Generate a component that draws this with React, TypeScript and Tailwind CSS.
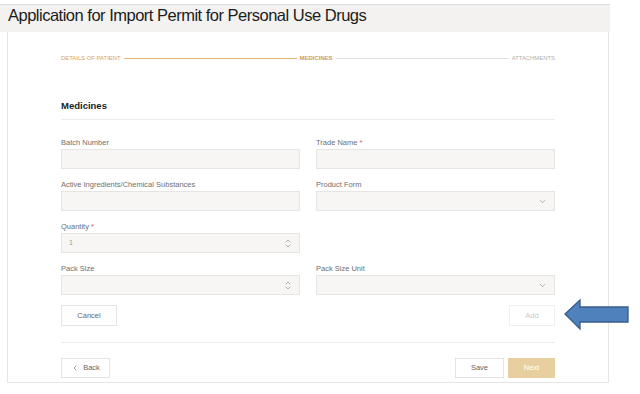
import { ChevronDown, ChevronUp, ChevronLeft } from 'lucide-react'

function Field({ label, required, kind }: { label: string; required?: boolean; kind?: 'text' | 'select' | 'number' }) {
  return (
    <div className="flex flex-col">
      <div className="h-[10px] leading-[10px] text-[7.5px] text-[#6f6f6f]">
        {label}
        {required && <span className="text-[#e05a4f]"> *</span>}
      </div>
      <div className="mt-[1px] h-[20px] bg-[#f7f6f4] border border-[#e7e5e2] flex items-center justify-between px-[7px]">
        <span className="text-[7px] text-[#9a9a9a]">{label === 'Quantity' ? '1' : ''}</span>
        {kind === 'select' && <ChevronDown size={9} strokeWidth={1.5} className="text-[#777]" />}
        {kind === 'number' && (
          <div className="flex flex-col items-center -space-y-[3px]">
            <ChevronUp size={8} strokeWidth={1.6} className="text-[#777]" />
            <ChevronDown size={8} strokeWidth={1.6} className="text-[#777]" />
          </div>
        )}
      </div>
    </div>
  )
}

export default function App() {
  return (
    <div className="relative w-[640px] h-[394px] bg-white overflow-hidden font-['Liberation_Sans',Arial,sans-serif]">
      {/* Page title band */}
      <div className="mt-[4px] w-[610px] h-[28px] bg-[#f3f2f1] border-t border-[#dcdcdc] pl-[8px]">
        <h1 className="text-[16.5px] leading-[21px] tracking-[-0.5px] text-[#1c1c1c]">
          Application for Import Permit for Personal Use Drugs
        </h1>
      </div>

      {/* Form card */}
      <div className="ml-[7px] w-[602px] h-[351px] bg-white border-x border-b border-[#e6e6e6] px-[53px] pt-[22px]">
        {/* Stepper */}
        <div className="flex items-center h-[8px] text-[5.9px] leading-[8px]">
          <span className="text-[#d9a25c]">DETAILS OF PATIENT</span>
          <div className="flex-1 h-px bg-[#e3b472] mx-[3px]" />
          <span className="text-[#d39a4f] font-bold">MEDICINES</span>
          <div className="flex-1 h-px bg-[#e2e2e2] mx-[3px]" />
          <span className="text-[#b0b0b0]">ATTACHMENTS</span>
        </div>

        {/* Section heading */}
        <div className="mt-[38px] pb-[7px] border-b border-[#ebebeb]">
          <h2 className="text-[9.5px] leading-[12px] font-bold text-[#222]">Medicines</h2>
        </div>

        {/* Fields */}
        <div className="mt-[18px] grid grid-cols-2 gap-x-[16px] gap-y-[11px]">
          <Field label="Batch Number" />
          <Field label="Trade Name" required />
          <Field label="Active Ingredients/Chemical Substances" />
          <Field label="Product Form" kind="select" />
          <Field label="Quantity" required kind="number" />
          <div />
          <Field label="Pack Size" kind="number" />
          <Field label="Pack Size Unit" kind="select" />
        </div>

        {/* Cancel / Add */}
        <div className="mt-[10px] flex justify-between">
          <button className="w-[56px] h-[21px] border border-[#e3e3e3] bg-white text-[7.5px] text-[#666]">Cancel</button>
          <button className="w-[46px] h-[21px] border border-[#efefef] bg-white text-[7.5px] text-[#c9c9c9]">Add</button>
        </div>

        <div className="mt-[16px] h-px bg-[#ebebeb]" />

        {/* Navigation */}
        <div className="mt-[15px] flex items-center">
          <button className="w-[49px] h-[20px] border border-[#e3e3e3] bg-white flex items-center justify-center gap-[4px] text-[7.5px] text-[#666]">
            <ChevronLeft size={8} strokeWidth={2} />
            Back
          </button>
          <div className="flex-1" />
          <button className="w-[49px] h-[20px] border border-[#e3e3e3] bg-white text-[7.5px] text-[#666]">Save</button>
          <button className="ml-[4px] w-[47px] h-[20px] bg-[#e8cf9f] text-[7.5px] text-white">Next</button>
        </div>
      </div>

      {/* Annotation arrow */}
      <svg className="absolute left-[563px] top-[298px]" width="68" height="34" viewBox="0 0 68 34">
        <polygon
          points="2,16 17,2 17,9 65,9 65,24 17,24 17,31"
          fill="#4f81bd"
          stroke="#385d8a"
          strokeWidth="1.3"
          strokeLinejoin="miter"
        />
      </svg>
    </div>
  )
}
